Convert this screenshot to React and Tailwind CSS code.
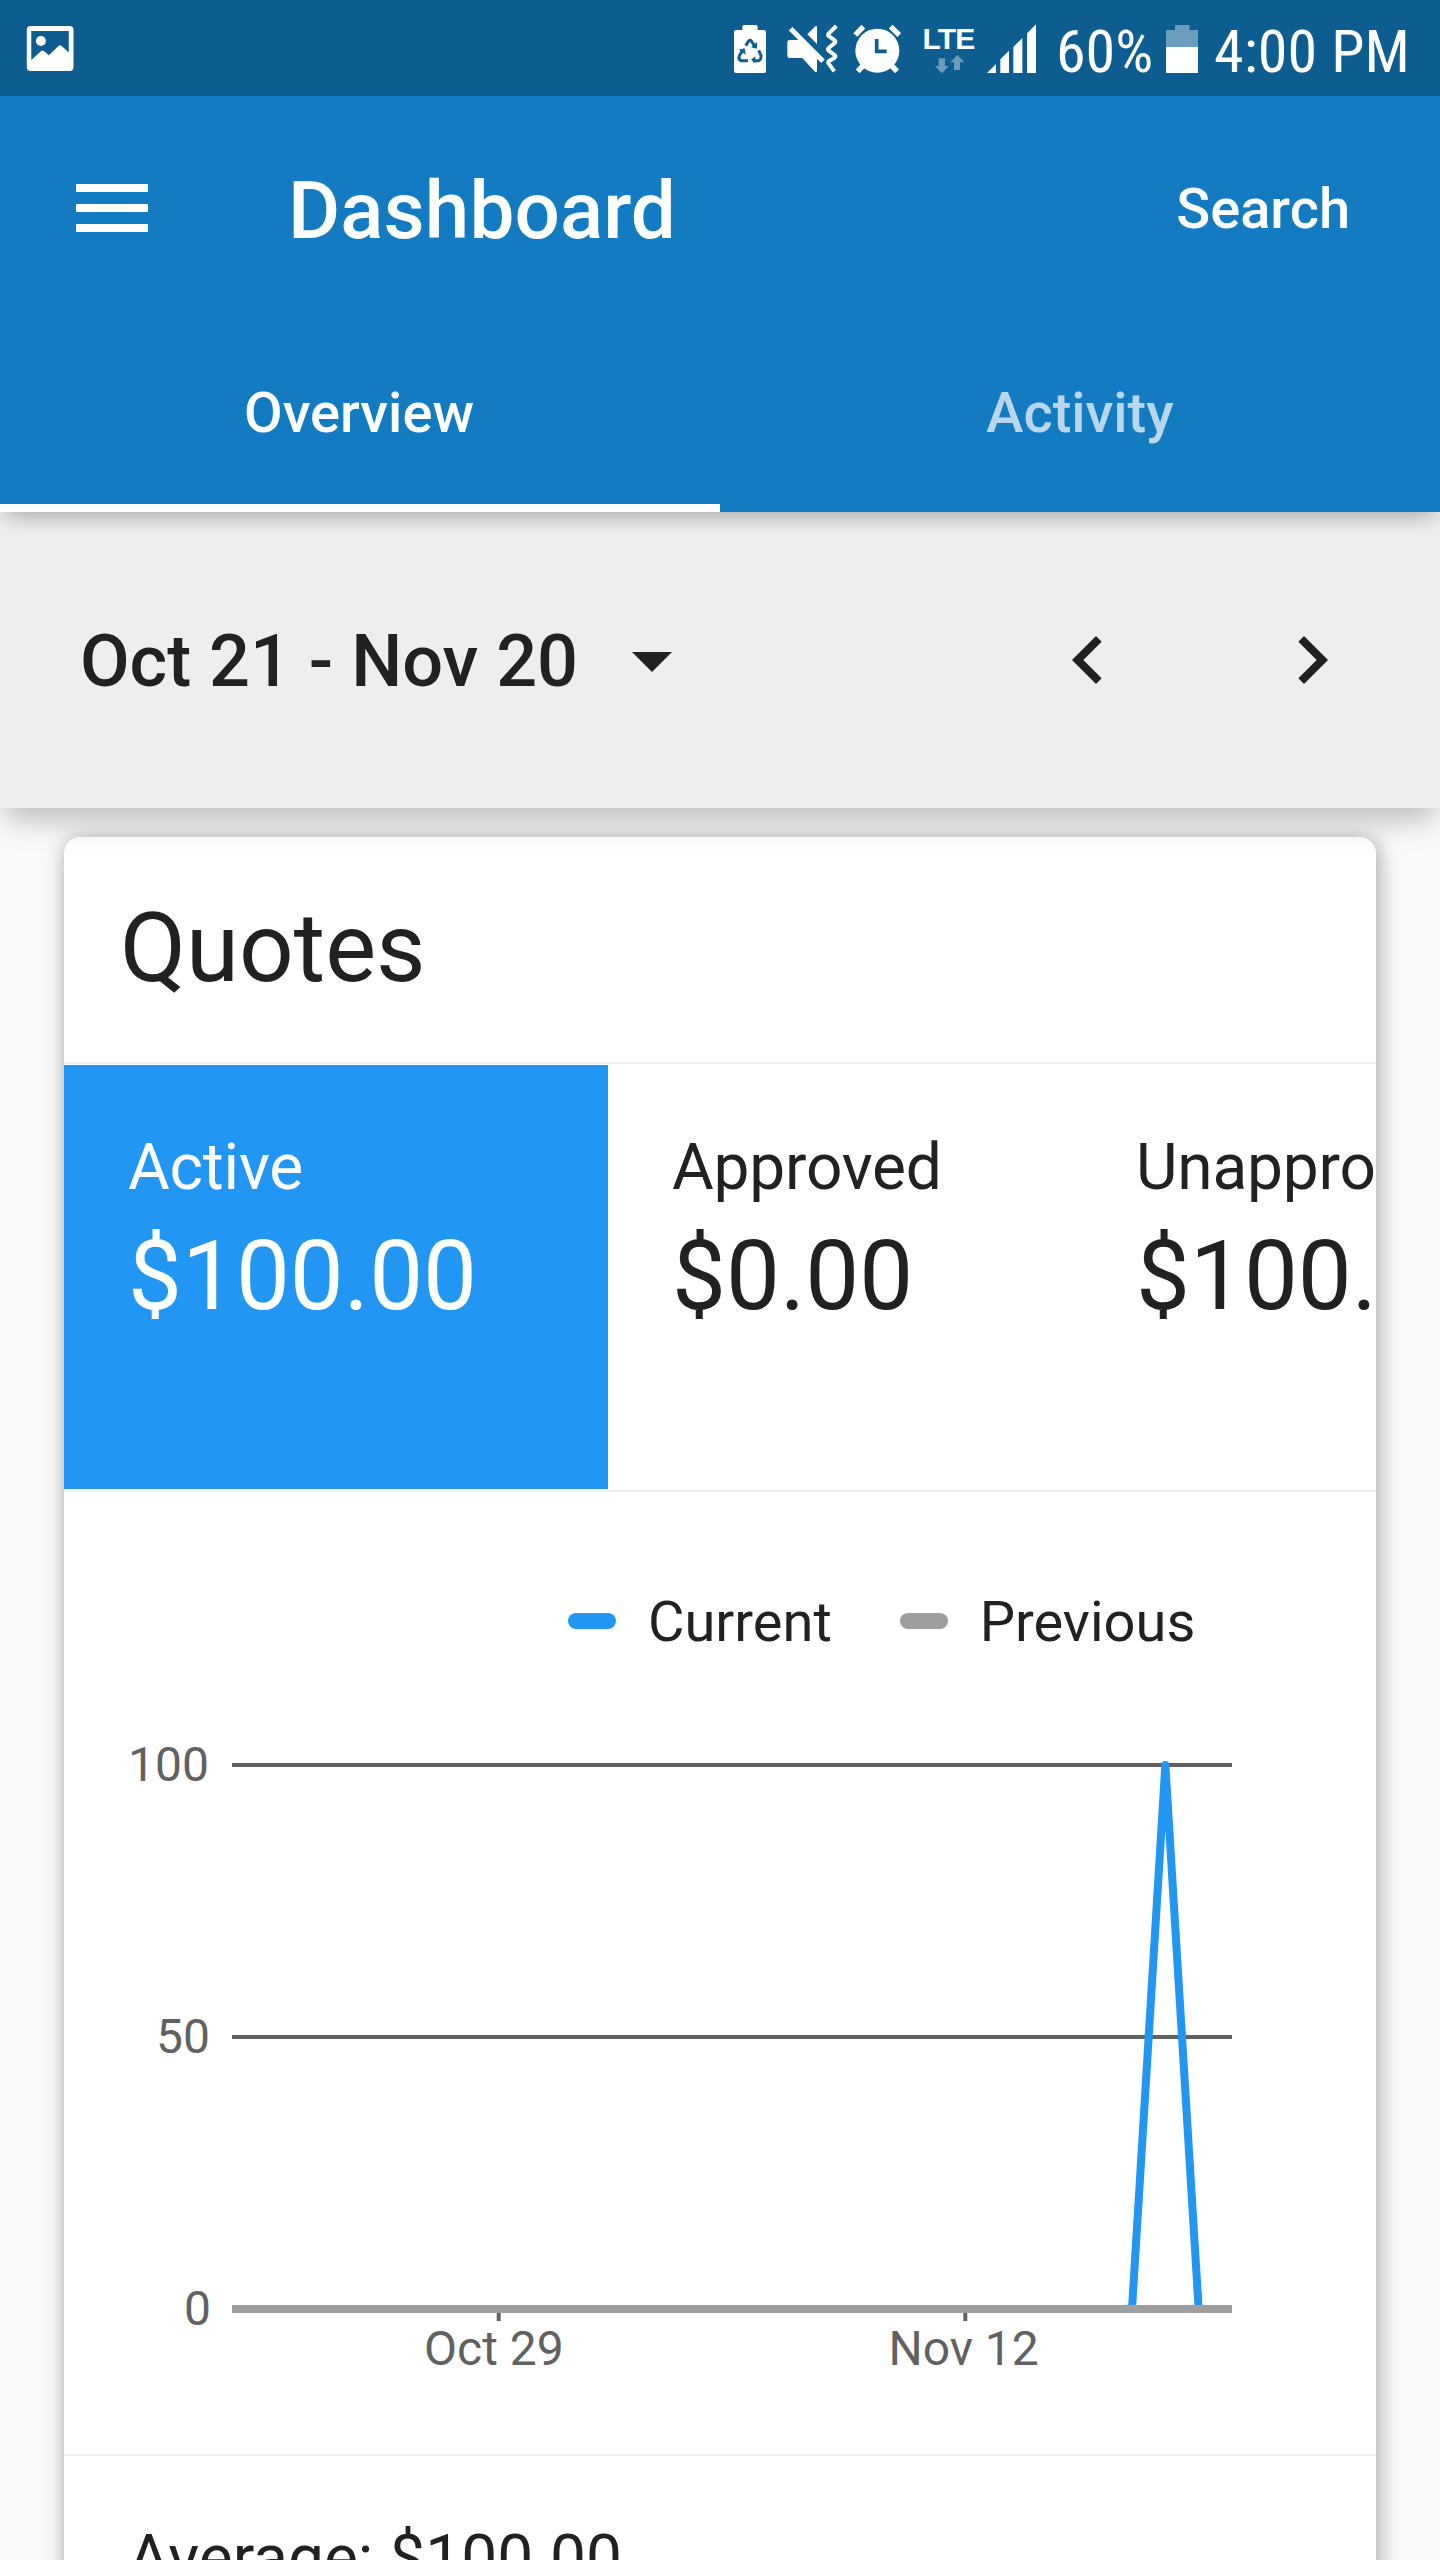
import React from "react";

const STATUS_BG = "#0d5d91";
const DIM = "#6d9dbd";

function GalleryIcon() {
  return (
    <svg className="ml-[26px] h-24 w-12 shrink-0" viewBox="26 0 48 96" fill="#fff">
      <path fillRule="evenodd" d="M30.5 26h39.3a3.7 3.7 0 0 1 3.7 3.7v37.6a3.7 3.7 0 0 1-3.7 3.7H30.5a3.7 3.7 0 0 1-3.7-3.7V29.7A3.7 3.7 0 0 1 30.5 26zM31.3 31v29l9.9-9q1.3-1 2.6 0l5 4.3 10-9.5q1.3-1 2.6 0l7.4 6.6V31z" />
      <circle cx="40.9" cy="41" r="5" />
    </svg>
  );
}

function RecycleBatteryIcon() {
  return (
    <svg className="h-24 w-8 shrink-0" viewBox="42 0 96 288">
      <path fill="#fff" d="M67 90v-9q0-6 6-6h34q6 0 6 6v9h19q6 0 6 6v117q0 6-6 6H48q-6 0-6-6V96q0-6 6-6z" />
      <g fill="none" stroke={STATUS_BG} strokeWidth="9" strokeLinejoin="round">
        <path d="M77 137l9-14q4-4 8 0l9 14" />
        <path d="M116 151l7 15q1 14-8 16h-16" />
        <path d="M84 182H63q-9-4-5-15l8-13" />
      </g>
      <g fill={STATUS_BG}>
        <path d="M111 126v20l-18-4z" />
        <path d="M106 169v20l-13-10z" />
        <path d="M56 149l18-4 3 19z" />
      </g>
    </svg>
  );
}

function MuteIcon() {
  return (
    <svg className="ml-5 h-24 w-[52px] shrink-0" viewBox="198 0 156 288">
      <path fill="#fff" d="M202 127q0-7 7-7h32l50 50v42q0 6-6 3l-38-41h-38q-7 0-7-7z" />
      <path fill="#fff" d="M262 103l24-24q5-3 5 3v50z" />
      <path fill="none" stroke="#fff" strokeWidth="15" d="M212 86l97 98" />
      <path fill="none" stroke="#fff" strokeWidth="12" strokeLinejoin="round" d="M349 78l-23 23q-3 4 0 7l18 13q4 4 0 8l-18 15q-4 4 0 8l18 13q4 4 0 8l-17 10q-4 4-1 8l17 23" />
    </svg>
  );
}

function AlarmIcon() {
  return (
    <svg className="ml-[15px] h-24 w-12 shrink-0" viewBox="400 0 144 288">
      <circle cx="473" cy="152" r="66" fill="#fff" />
      <path fill="none" stroke="#fff" strokeWidth="16" d="M407 105l24-25M513 80l26 25M431 196l-17 18M515 196l17 18" />
      <path fill="none" stroke={STATUS_BG} strokeWidth="11" d="M471 117v37h30" />
    </svg>
  );
}

function LteIcon() {
  return (
    <svg className="ml-[20px] h-24 w-14 shrink-0" viewBox="-3 0 56 96">
      <text x="-1.6" y="49" fill="#fff" fontSize="30" letterSpacing="-0.8" className="font-['Liberation_Sans',sans-serif] font-bold">LTE</text>
      <g fill={DIM} transform="translate(-204 0) scale(.33333)">
        <path d="M656 175h19v23h11l-20 22-21-22h11z" />
        <path d="M702 210v-23h-11l21-22 21 22h-13v23z" />
      </g>
    </svg>
  );
}

function SignalIcon() {
  return (
    <svg className="ml-[10px] h-24 w-[49px] shrink-0" viewBox="801 0 147 288" fill="#fff">
      <path d="M801 219l27-27v27zM841 219v-41l26-26v67zM880 219v-78l27-27v105zM921 219V100l27-27v146z" />
    </svg>
  );
}

function BatteryIcon() {
  return (
    <svg className="h-24 w-8 shrink-0" viewBox="438 0 96 288">
      <path fill={DIM} d="M438 141V90h27V75h43v15h26v51z" />
      <path fill="#fff" d="M438 141h96v78h-96z" />
    </svg>
  );
}

function StatusBar() {
  return (
    <div className="flex h-24 items-center justify-between bg-[#0d5d91] text-white">
      <GalleryIcon />
      <div className="flex items-center pr-[30px]">
        <RecycleBatteryIcon />
        <MuteIcon />
        <AlarmIcon />
        <LteIcon />
        <SignalIcon />
        <span className="ml-5 w-[110px] pt-[7px] font-['Roboto_Condensed','Roboto',sans-serif] text-[60px] leading-none whitespace-nowrap">60%</span>
        <BatteryIcon />
        <span className="ml-4 w-[196px] pt-[7px] font-['Roboto_Condensed','Roboto',sans-serif] text-[60px] leading-none tracking-[0.1px] whitespace-nowrap">4:00 PM</span>
      </div>
    </div>
  );
}

function MaterialIcon({ d, className }) {
  return (
    <svg className={className} viewBox="0 0 24 24" fill="currentColor">
      <path d={d} />
    </svg>
  );
}

function Header() {
  return (
    <header className="relative z-20 bg-[#127bc2] text-white shadow-[0_10px_20px_-6px_rgba(0,0,0,0.3)]">
      <StatusBar />
      <div className="flex h-56 items-center pr-[90px] pl-16">
        <MaterialIcon className="size-24" d="M3 6h18v2H3zM3 11h18v2H3zM3 16h18v2H3z" />
        <h1 className="ml-32 flex-1 pt-[5px] text-[80px] leading-none font-medium tracking-[0.1px]">Dashboard</h1>
        <button className="pt-[2px] text-[56px] leading-none font-medium">Search</button>
      </div>
      <nav className="grid grid-cols-2 text-[56px] leading-none font-medium">
        <button className="flex h-48 items-center justify-center border-b-8 border-white pt-[2px] pr-[2px]">Overview</button>
        <button className="flex h-48 items-center justify-center border-b-8 border-transparent pt-[2px] text-white/70">Activity</button>
      </nav>
    </header>
  );
}

function DateBar() {
  return (
    <div className="relative z-10 flex h-[296px] items-center bg-[#eeeeee] pr-20 pl-20 shadow-[0_16px_30px_-6px_rgba(0,0,0,0.28)]">
      <span className="w-[498px] pt-[3px] text-[72px] leading-none font-medium whitespace-nowrap">Oct 21 - Nov 20</span>
      <MaterialIcon className="ml-[26px] size-24" d="M7 10l5 5 5-5z" />
      <div className="ml-auto flex gap-32">
        <MaterialIcon className="size-24" d="M15.41 7.41L14 6l-6 6 6 6 1.41-1.41L10.83 12z" />
        <MaterialIcon className="size-24" d="M10 6L8.59 7.41 13.17 12l-4.58 4.59L10 18l6-6z" />
      </div>
    </div>
  );
}

function Metric({ label, value, className }) {
  return (
    <div className={`h-[424px] shrink-0 pt-[65px] pl-16 ${className}`}>
      <div className="text-[64px] leading-[76px] tracking-[-0.2px]">{label}</div>
      <div className="mt-[14px] text-[96px] leading-[112px]">{value}</div>
    </div>
  );
}

function LegendItem({ label, color }) {
  return (
    <div className="flex items-center gap-8">
      <span className={`h-4 w-12 rounded-full ${color}`} />
      <span className="pt-[2px]">{label}</span>
    </div>
  );
}

function Chart() {
  const left = 168;
  const right = 1168;
  const day = (right - left) / 30;
  const top = 103;
  const base = 647;
  const points = [[0, base], [27, base], [28, top], [29, base], [30, base]]
    .map(([d, y]) => `${left + d * day},${y}`)
    .join(" ");
  return (
    <svg className="block h-[792px] w-[1312px] font-['Roboto',sans-serif] text-[48px]" viewBox="0 0 1312 792" fill="#616161">
      <path d="M168 101h1000v4H168zM168 373h1000v4H168z" />
      <path d="M432.7 647h4v12h-4zM899.3 647h4v12h-4z" />
      <polyline points={points} fill="none" stroke="#2196f3" strokeWidth="8" strokeLinejoin="round" />
      <path d="M168 643h1000v8H168z" fill="#9e9e9e" />
      <text x="64" y="119">100</text>
      <text x="92" y="391">50</text>
      <text x="120" y="663">0</text>
      <text x="360" y="703">Oct 29</text>
      <text x="824.4" y="703">Nov 12</text>
    </svg>
  );
}

function QuotesCard() {
  return (
    <section className="mx-16 mt-[29px] rounded-2xl bg-white shadow-[2px_3px_22px_rgba(0,0,0,0.36)]">
      <h2 className="flex h-[227px] items-center border-b-2 border-[#eeeeee] pb-1 pl-[56px] text-[96px] leading-none">Quotes</h2>
      <div className="flex overflow-hidden border-b-2 border-[#eeeeee] py-px">
        <Metric className="w-[544px] bg-[#2196f3] text-white" label="Active" value="$100.00" />
        <Metric className="w-[464px]" label="Approved" value="$0.00" />
        <Metric className="w-[544px]" label="Unapproved" value="$100.00" />
      </div>
      <div className="border-b-2 border-[#eeeeee]">
        <div className="flex h-[170px] items-end gap-[68px] pb-[7px] pl-[504px] text-[56px] leading-[66px]">
          <LegendItem label="Current" color="bg-[#2196f3]" />
          <LegendItem label="Previous" color="bg-[#9e9e9e]" />
        </div>
        <Chart />
      </div>
      <p className="px-16 pt-[65px] pb-16 text-[64px] leading-[76px]">Average: $100.00</p>
    </section>
  );
}

export default function App() {
  return (
    <div className="h-[2560px] w-[1440px] overflow-hidden bg-[#fafafa] font-['Roboto',sans-serif] text-[#212121]">
      <Header />
      <DateBar />
      <QuotesCard />
    </div>
  );
}
